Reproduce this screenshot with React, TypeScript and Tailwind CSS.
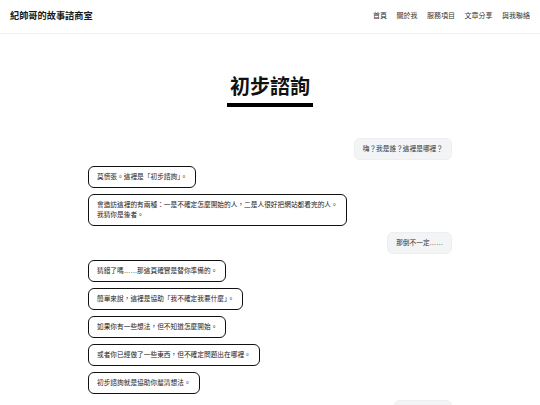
const navItems = ["首頁", "關於我", "服務項目", "文章分享", "與我聯絡"];

type Message = {
  from: "user" | "bot";
  lines: string[];
};

const messages: Message[] = [
  { from: "user", lines: ["嗨？我是誰？這裡是哪裡？"] },
  { from: "bot", lines: ["莫慌張。這裡是「初步諮詢」。"] },
  {
    from: "bot",
    lines: [
      "會造訪這裡的有兩種：一是不確定怎麼開始的人，二是人很好把網站都看完的人。",
      "我猜你是後者。",
    ],
  },
  { from: "user", lines: ["那倒不一定……"] },
  { from: "bot", lines: ["猜錯了嗎……那這頁確實是替你準備的。"] },
  { from: "bot", lines: ["簡單來說，這裡是協助「我不確定我要什麼」。"] },
  { from: "bot", lines: ["如果你有一些想法，但不知道怎麼開始。"] },
  { from: "bot", lines: ["或者你已經做了一些東西，但不確定問題出在哪裡。"] },
  { from: "bot", lines: ["初步諮詢就是協助你釐清想法。"] },
  { from: "user", lines: ["那要怎麼做？"] },
];

const Bubble = ({ from, lines }: Message) => {
  const isUser = from === "user";
  return (
    <div className={isUser ? "flex justify-end" : "flex justify-start"}>
      <div
        className={
          isUser
            ? "rounded-[6px] border border-[#eceef1] bg-[#f3f4f6] px-[8px] py-[5px] text-[6.7px] leading-[10px] text-[#333]"
            : "rounded-[6px] border border-[#111] bg-white px-[8px] py-[5px] text-[6.7px] leading-[10px] text-[#222]"
        }
      >
        {lines.map((line, i) => (
          <div key={i} className="whitespace-nowrap">
            {line}
          </div>
        ))}
      </div>
    </div>
  );
};

export default function App() {
  return (
    <div
      className="min-h-[405px] w-full overflow-hidden bg-white"
      style={{ fontFamily: '"Liberation Sans", "Noto Sans CJK TC", sans-serif' }}
    >
      <header className="flex h-[34px] items-center justify-between border-b border-[#f0f0f0] px-[10px]">
        <div className="text-[9.2px] font-bold text-[#1a1a1a]">紀帥哥的故事諮商室</div>
        <nav className="flex gap-[9.5px] text-[7px] text-[#333]">
          {navItems.map((item) => (
            <span key={item}>{item}</span>
          ))}
        </nav>
      </header>

      <main className="flex flex-col items-center pt-[41px]">
        <h1 className="border-b-4 border-black px-[3px] pb-[4px] text-[20px] font-bold leading-[24px] text-[#111]">
          初步諮詢
        </h1>

        <div className="mt-[31px] flex w-[364px] flex-col gap-[6px]">
          {messages.map((m, i) => (
            <Bubble key={i} {...m} />
          ))}
        </div>
      </main>
    </div>
  );
}
